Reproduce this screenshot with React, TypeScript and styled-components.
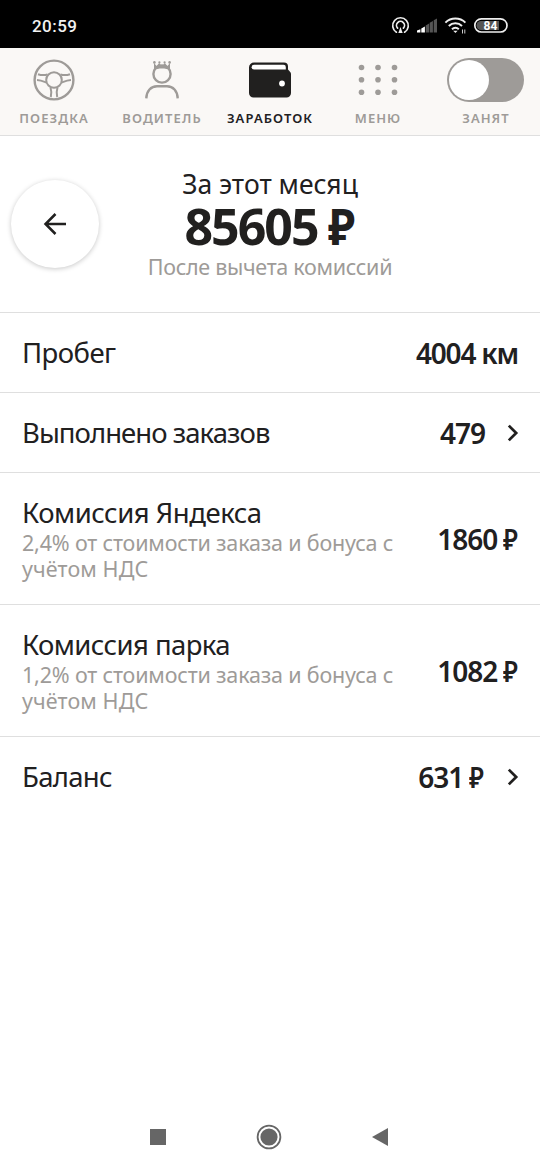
import React from "react";
import styled, { createGlobalStyle } from "styled-components";

const ink = "#21201f";
const muted = "#9e9b98";
const line = "#dfdfdf";

const GlobalStyle = createGlobalStyle`
  * { box-sizing: border-box; }
  body { margin: 0; background: #fff; }
`;

const Screen = styled.div`
  display: flex;
  flex-direction: column;
  width: 540px;
  height: 1170px;
  background: #fff;
  color: ${ink};
  font-family: "Noto Sans", "Open Sans", sans-serif;
`;

const StatusBar = styled.div`
  display: flex;
  align-items: center;
  justify-content: space-between;
  height: 48px;
  padding: 3px 32px 0 32px;
  background: #000;
`;

const Clock = styled.span`
  font: 500 17px/20px Roboto, sans-serif;
  letter-spacing: 0.45px;
  color: #f2f2f2;
`;

const StatusIcons = styled.div`
  display: flex;
  align-items: center;
`;

const TabBar = styled.nav`
  display: grid;
  grid-template-columns: repeat(5, 108px);
  height: 88px;
  background: #faf8f6;
  border-bottom: 1px solid ${line};
`;

const Tab = styled.div<{ $active?: boolean }>`
  display: flex;
  flex-direction: column;
  align-items: center;
  color: ${(p) => (p.$active ? ink : muted)};
`;

const TabIcon = styled.div`
  display: flex;
  align-items: center;
  justify-content: center;
  height: 60px;
  padding-top: 4px;
`;

const TabLabel = styled.span<{ $tracking: number }>`
  font-size: 13px;
  line-height: 20px;
  font-weight: 600;
  white-space: nowrap;
  letter-spacing: ${(p) => p.$tracking}px;
`;

const Switch = styled.div`
  display: flex;
  align-items: center;
  width: 77px;
  height: 44px;
  margin-right: 1px;
  padding: 2px;
  border-radius: 22px;
  background: ${muted};
`;

const Knob = styled.div`
  width: 40px;
  height: 40px;
  border-radius: 50%;
  background: #fff;
`;

const Summary = styled.header`
  display: grid;
  grid-template-columns: 110px 1fr 110px;
  height: 176px;
  padding-top: 32px;
`;

const BackButton = styled.button`
  display: flex;
  align-items: center;
  justify-content: center;
  width: 88px;
  height: 88px;
  margin: 12px 0 0 11px;
  padding: 0;
  border: 0;
  border-radius: 50%;
  background: #fff;
  box-shadow: 0 1px 5px rgba(0, 0, 0, 0.22);
`;

const Totals = styled.div`
  display: flex;
  flex-direction: column;
  align-items: center;
  white-space: nowrap;
`;

const Period = styled.div`
  font-size: 26.5px;
  line-height: 33px;
`;

const Total = styled.div`
  font-size: 50px;
  line-height: 51px;
  font-weight: 700;
  letter-spacing: -2px;
`;

const TotalNote = styled.div`
  font-size: 21.5px;
  line-height: 30px;
  letter-spacing: -0.3px;
  color: ${muted};
`;

const Ruble = styled.span<{ $gap: number }>`
  display: inline-block;
  margin-left: ${(p) => p.$gap}px;
  transform: scaleX(0.9);
  transform-origin: left;
`;

const Row = styled.section<{ $tall?: boolean }>`
  display: flex;
  align-items: center;
  justify-content: space-between;
  height: ${(p) => (p.$tall ? 132 : 80)}px;
  padding: 0 22px;
  border-top: 1px solid ${line};
`;

const RowText = styled.div`
  display: flex;
  flex-direction: column;
  white-space: nowrap;
`;

const Title = styled.div<{ $tracking?: number; $tight?: boolean }>`
  font-size: 27.5px;
  line-height: ${(p) => (p.$tight ? 34 : 36)}px;
  letter-spacing: ${(p) => p.$tracking ?? 0}px;
`;

const Detail = styled.div<{ $tracking?: number }>`
  font-size: 21.5px;
  line-height: 26px;
  color: ${muted};
  letter-spacing: ${(p) => p.$tracking ?? 0}px;
`;

const Value = styled.div<{ $tracking?: number; $shift?: number }>`
  display: flex;
  align-items: center;
  margin-right: ${(p) => -(p.$shift ?? 0)}px;
  font-size: 28px;
  line-height: 36px;
  font-weight: 600;
  letter-spacing: ${(p) => p.$tracking ?? -1}px;
  white-space: nowrap;
`;

const Chevron = styled.svg`
  margin: 0 -1px 0 22px;
`;

const SystemNav = styled.footer`
  display: flex;
  align-items: center;
  justify-content: space-between;
  height: 66px;
  margin-top: auto;
  padding: 0 152px 0 150px;
`;

const ArrowRight = () => (
  <Chevron width="12" height="18" viewBox="0 0 12 18" fill="none" stroke={ink} strokeWidth="2.7">
    <path d="M1.8 1.6 9.2 9 1.8 16.4" />
  </Chevron>
);

const StatusGlyphs = () => (
  <svg width="118" height="22" viewBox="390 15 118 22" fill="none">
    <g stroke="#eee" strokeWidth="1.7" strokeLinecap="round">
      <path d="M396.4 32.2A7.8 7.8 0 1 1 404.6 32.2" />
      <path d="M397.6 28.2A4 4 0 1 1 403.4 28.2" />
    </g>
    <path d="M400.5 27l2.2 6h-4.4z" fill="#eee" />
    <path d="M417 30.5l3.4-1.2v3.2H417z M421.3 28.5l3.6-2v6h-3.6z" fill="#fff" />
    <path d="M425.7 25.5l3.4-2v9h-3.4z M429.7 22.8l3.2-1.8v11.5h-3.2z M433.7 20.3l3.3-1.8v14h-3.3z" fill="#555" />
    <g stroke="#eee" strokeWidth="2">
      <path d="M445.4 22.6a14.5 14.5 0 0 1 20 0" />
      <path d="M448.8 26a9.6 9.6 0 0 1 13.2 0" />
      <path d="M452 29.2a5 5 0 0 1 6.8 0" />
    </g>
    <path d="M453.2 30.8h4.4L455.4 33z" fill="#eee" />
    <path d="M462.5 29.5v4M464.8 29.5v4" stroke="#ccc" strokeWidth="1" />
    <rect x="474.8" y="18.8" width="32.2" height="13.2" rx="6.6" stroke="#eee" strokeWidth="1.7" />
    <path d="M481 21h18v9h-18a4.5 4.5 0 0 1 0-9z" fill="#555" />
    <text x="490.5" y="29.8" fill="#fff" fontFamily="Roboto, sans-serif" fontSize="12" fontWeight="700" textAnchor="middle">
      84
    </text>
  </svg>
);

const Wheel = () => (
  <svg width="42" height="42" viewBox="0 0 42 42" fill="none" stroke="currentColor" strokeWidth="2">
    <circle cx="21" cy="21" r="19.4" strokeWidth="2.4" />
    <circle cx="21" cy="21" r="7.8" />
    <path d="M5 15.2c4 1.4 6 1.3 9.5.3M37 15.2c-4 1.4-6 1.3-9.5.3M4 21c4 .2 6 1.2 9.5 2.6M38 21c-4 .2-6 1.2-9.5 2.6M17.5 28.5c1 3 1.2 5.6.3 9.5M24.5 28.5c-1 3-1.2 5.6-.3 9.5" />
  </svg>
);

const Driver = () => (
  <svg width="36" height="40" viewBox="0 0 36 40" fill="none" stroke="currentColor" strokeWidth="2.4">
    <circle cx="18" cy="14" r="8.6" />
    <path d="M10 10V3l2.6 3 2.6-3L18 6.200 20.800 3l2.600 3L26 3v7c-4-2-12-2-16 0z" fill="currentColor" stroke="none" />
    <g fill="currentColor" stroke="none">
      <circle cx="10.4" cy="2.4" r="1.3" />
      <circle cx="15.4" cy="2.4" r="1.1" />
      <circle cx="20.6" cy="2.4" r="1.1" />
      <circle cx="25.6" cy="2.4" r="1.3" />
    </g>
    <path d="M2.3 38.4C2.5 30.9 7 26.2 13 26.2h10c6 0 10.5 4.7 10.7 12.2" />
  </svg>
);

const Wallet = () => (
  <svg width="42" height="36" viewBox="0 0 42 36">
    <path d="M5 .5h30a4 4 0 0 1 4 4v3l2 2.3a3 3 0 0 1 1 2.2v19a4.5 4.5 0 0 1-4.5 4.5h-33A4.5 4.5 0 0 1 0 31V5.5a5 5 0 0 1 5-5z" fill="currentColor" />
    <path d="M5 2.8h29.5a2.3 2.3 0 0 1 2.3 2.3v2.4H5A2.35 2.35 0 0 1 5 2.8z" fill="#fff" />
    <circle cx="33" cy="21.5" r="2.9" fill="#fff" />
  </svg>
);

const Dots = () => (
  <svg width="40" height="32" viewBox="0 0 40 32" fill="currentColor">
    {[3.5, 15.8, 28.2].map((y) =>
      [3.5, 20, 36.5].map((x) => <circle key={`${x}-${y}`} cx={x} cy={y} r="2.8" />)
    )}
  </svg>
);

export default function App() {
  return (
    <Screen>
      <GlobalStyle />
      <StatusBar>
        <Clock>20:59</Clock>
        <StatusIcons><StatusGlyphs /></StatusIcons>
      </StatusBar>
      <TabBar>
        <Tab><TabIcon><Wheel /></TabIcon><TabLabel $tracking={1.1}>ПОЕЗДКА</TabLabel></Tab>
        <Tab><TabIcon><Driver /></TabIcon><TabLabel $tracking={1.1}>ВОДИТЕЛЬ</TabLabel></Tab>
        <Tab $active><TabIcon><Wallet /></TabIcon><TabLabel $tracking={1.1}>ЗАРАБОТОК</TabLabel></Tab>
        <Tab><TabIcon><Dots /></TabIcon><TabLabel $tracking={1}>МЕНЮ</TabLabel></Tab>
        <Tab><TabIcon><Switch><Knob /></Switch></TabIcon><TabLabel $tracking={1}>ЗАНЯТ</TabLabel></Tab>
      </TabBar>
      <Summary>
        <BackButton aria-label="Назад">
          <svg width="24" height="24" viewBox="0 0 24 24" fill="none" stroke={ink} strokeWidth="2.5">
            <path d="M23 12H2.5M12.5 2 2.5 12l10 10" />
          </svg>
        </BackButton>
        <Totals>
          <Period>За этот месяц</Period>
          <Total>85605<Ruble $gap={10}>₽</Ruble></Total>
          <TotalNote>После вычета комиссий</TotalNote>
        </Totals>
      </Summary>
      <Row>
        <Title $tracking={-0.55}>Пробег</Title>
        <Value $tracking={-1.2}>4004 км</Value>
      </Row>
      <Row>
        <Title $tracking={-0.95}>Выполнено заказов</Title>
        <Value>479<ArrowRight /></Value>
      </Row>
      <Row $tall>
        <RowText>
          <Title $tight $tracking={-0.48}>Комиссия Яндекса</Title>
          <Detail $tracking={-0.18}>2,4% от стоимости заказа и бонуса с</Detail>
          <Detail $tracking={0.1}>учётом НДС</Detail>
        </RowText>
        <Value $shift={1}>1860<Ruble $gap={6}>₽</Ruble></Value>
      </Row>
      <Row $tall>
        <RowText>
          <Title $tight $tracking={-0.58}>Комиссия парка</Title>
          <Detail $tracking={-0.18}>1,2% от стоимости заказа и бонуса с</Detail>
          <Detail $tracking={0.1}>учётом НДС</Detail>
        </RowText>
        <Value $shift={1}>1082<Ruble $gap={6}>₽</Ruble></Value>
      </Row>
      <Row>
        <Title $tracking={-0.7}>Баланс</Title>
        <Value>631<Ruble $gap={6}>₽</Ruble><ArrowRight /></Value>
      </Row>
      <SystemNav>
        <svg width="16" height="16" viewBox="0 0 16 16"><path d="M0 0h16v16H0z" fill="#666" /></svg>
        <svg width="26" height="26" viewBox="0 0 26 26">
          <circle cx="13" cy="13" r="11.4" fill="none" stroke="#666" strokeWidth="1.8" />
          <circle cx="13" cy="13" r="8.6" fill="#666" />
        </svg>
        <svg width="16" height="18" viewBox="0 0 16 18"><path d="M0 9 16 0v18z" fill="#666" /></svg>
      </SystemNav>
    </Screen>
  );
}
